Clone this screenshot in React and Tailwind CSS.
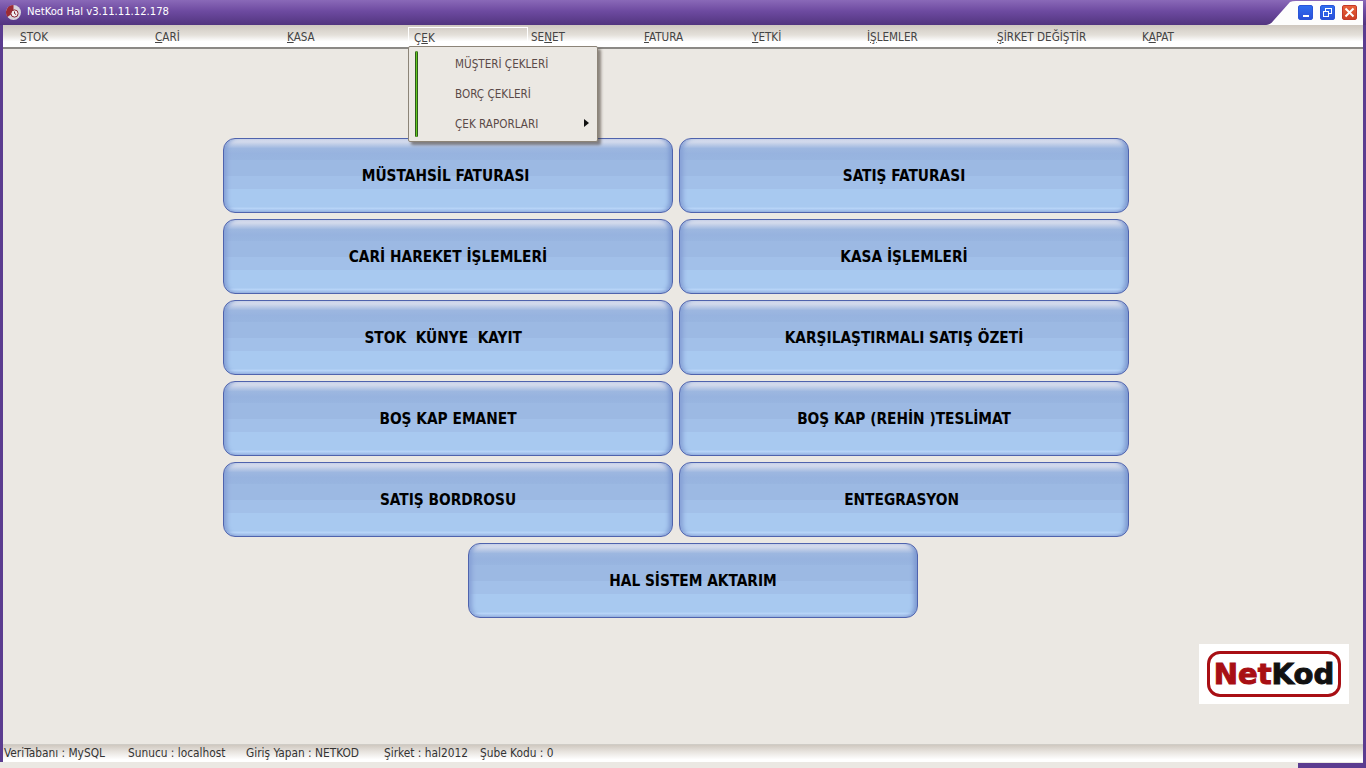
// NetKod Hal main window
const MENU = [
  { pre: '', key: 'S', post: 'TOK', w: 135 },
  { pre: '', key: 'C', post: 'ARİ', w: 132 },
  { pre: '', key: 'K', post: 'ASA', w: 124 },
  { pre: 'Ç', key: 'E', post: 'K', w: 120, active: true },
  { pre: 'SE', key: 'N', post: 'ET', w: 113 },
  { pre: '', key: 'F', post: 'ATURA', w: 108 },
  { pre: '', key: 'Y', post: 'ETKİ', w: 115 },
  { pre: 'İ', key: 'Ş', post: 'LEMLER', w: 130 },
  { pre: '', key: 'Ş', post: 'İRKET DEĞİŞTİR', w: 145 },
  { pre: 'K', key: 'A', post: 'PAT', w: 80 },
]

const BUTTONS = [
  'MÜSTAHSİL FATURASI ', 'SATIŞ FATURASI',
  'CARİ HAREKET İŞLEMLERİ', 'KASA İŞLEMLERİ',
  'STOK  KÜNYE  KAYIT  ', 'KARŞILAŞTIRMALI SATIŞ ÖZETİ',
  'BOŞ KAP EMANET', 'BOŞ KAP (REHİN )TESLİMAT',
  'SATIŞ BORDROSU', 'ENTEGRASYON ',
]

const STATUS = [
  ['VeriTabanı : MySQL', 124],
  ['Sunucu : localhost', 118],
  ['Giriş Yapan : NETKOD', 138],
  ['Şirket : hal2012', 96],
  ['Şube Kodu : 0', 100],
]

function BigButton({ label, className = '' }) {
  return (
    <button
      className={`relative h-[75px] w-[450px] whitespace-pre rounded-[12px] border border-[#4f63ad] bg-[linear-gradient(180deg,#e4e6f0_0%,#cdd6ea_5%,#9db7e0_13%,#97b3df_20%,#98b5e0_28%,#9cb9e3_29%,#9cb9e3_50%,#a2c0e9_51%,#a2c0e9_68%,#a8c9f0_69%,#a8c9f0_93%,#b8d5f8_95%,#9db8e4_100%)] pt-[1px] text-center font-['DejaVu_Sans_Condensed','Liberation_Sans',sans-serif] text-[15.3px] font-bold text-black shadow-[inset_5px_0_4px_-2px_#86a1d6,inset_-5px_0_4px_-2px_#7c98d0] ${className}`}
    >
      {label}
    </button>
  )
}

function WinButton({ bg, children }) {
  return (
    <div className={`flex h-[15px] w-[15px] items-center justify-center rounded-[2px] border border-[#2a55d8] ${bg}`}>
      {children}
    </div>
  )
}

function Logo() {
  return (
    <div className="flex h-[60px] w-[150px] items-center justify-center bg-white">
      <div className="flex h-[46px] w-[134px] items-center justify-center rounded-[13px] border-[3px] border-[#a80f14] font-['DejaVu_Sans',sans-serif] text-[29px] font-bold leading-none [-webkit-text-stroke:1px]">
        <span className="text-[#a80f14]">Net</span>
        <span className="text-[#111]">Kod</span>
      </div>
    </div>
  )
}

export default function App() {
  return (
    <div className="relative flex h-screen w-full flex-col overflow-hidden bg-[#ebe8e3] font-['DejaVu_Sans_Condensed','Liberation_Sans',sans-serif] text-[11.6px] text-[#3a3a3a]">
      {/* title bar */}
      <div className="relative flex h-[25px] shrink-0 items-center bg-[linear-gradient(180deg,#8a69b8_0%,#6d4aa0_45%,#52357f_100%)] pl-[5px]">
        <svg width="17" height="17" viewBox="0 0 17 17" className="mr-[5px]">
          <circle cx="8.5" cy="8.5" r="7.5" fill="#d7d3dc" />
          <path d="M8.5 1a7.5 7.5 0 0 0-6 12l6-4.5z" fill="#9c2b35" />
          <circle cx="9.5" cy="9.5" r="3.6" fill="#f1eef2" stroke="#8d2630" />
          <path d="M9.5 7.5v2l1.6 1" fill="none" stroke="#7a1f28" />
        </svg>
        <span className="text-[11.2px] text-white">NetKod Hal v3.11.11.12.178</span>
        <svg width="100" height="25" viewBox="0 0 100 25" className="absolute right-0 top-0" preserveAspectRatio="none">
          <path d="M0 25 C3 25 5 24 8 20 L24 2 Q26 1 30 1 L97 1 L97 25 Z" fill="#fdfdfd" />
        </svg>
        <div className="absolute right-[9px] top-[5px] flex gap-[7px]">
          <WinButton bg="bg-[linear-gradient(180deg,#2f6df0,#2a50d8)]">
            <div className="mt-[6px] h-[2px] w-[6px] bg-white" />
          </WinButton>
          <WinButton bg="bg-[linear-gradient(180deg,#2f6df0,#2a50d8)]">
            <svg width="11" height="11" viewBox="0 0 11 11" fill="none" stroke="#fff">
              <rect x="3.5" y="1.5" width="6" height="5" />
              <rect x="1.5" y="4.5" width="5" height="5" fill="#2f62e6" />
            </svg>
          </WinButton>
          <div className="flex h-[15px] w-[15px] items-center justify-center rounded-[2px] border border-[#c2392a] bg-[linear-gradient(180deg,#e8633a,#cc3f24)]">
            <svg width="11" height="11" viewBox="0 0 11 11" stroke="#fff" strokeWidth="2">
              <path d="M1.5 1.5l8 8M9.5 1.5l-8 8" />
            </svg>
          </div>
        </div>
      </div>

      {/* menu bar */}
      <div className="mr-[3px] ml-[3px] flex h-[24px] shrink-0 border-b-2 border-[#8b8985] bg-[linear-gradient(180deg,#cfc8c0_0%,#e4e0da_45%,#ffffff_75%,#ffffff_100%)] pl-[14px] pt-[2px] text-[#444]">
        {MENU.map((m) => (
          <div
            key={m.post + m.key}
            style={{ width: m.w }}
            className={`h-[20px] whitespace-nowrap pl-[3px] leading-[20px] ${m.active ? 'border-l border-r border-t border-white pl-[5px]' : ''}`}
          >
            {m.pre}
            <span className="underline">{m.key}</span>
            {m.post}
          </div>
        ))}
      </div>

      {/* main area */}
      <div className="ml-[3px] mr-[3px] flex min-h-0 flex-1 flex-col">
        <div className="ml-[220px] mt-[89px] grid w-[906px] grid-cols-[450px_450px] gap-x-[6px] gap-y-[6px]">
          {BUTTONS.map((b) => (
            <BigButton key={b} label={b} />
          ))}
          <BigButton label="HAL SİSTEM AKTARIM" className="col-span-2 ml-[245px]" />
        </div>
        <div className="mr-[14px] mt-[26px] flex justify-end">
          <Logo />
        </div>
      </div>

      {/* status bar */}
      <div className="ml-[3px] mr-[3px] mb-[6px] mt-auto flex h-[18px] shrink-0 items-center border-t border-[#cfccc6] bg-[linear-gradient(180deg,#cfc8c0_0%,#e8e4df_40%,#ffffff_85%)] pl-[1px] text-[11.8px] text-[#333]">
        {STATUS.map(([t, w]) => (
          <span key={t} style={{ width: w }} className="whitespace-nowrap">
            {t}
          </span>
        ))}
      </div>

      {/* window frame */}
      <div className="absolute bottom-[6px] left-0 top-[25px] w-[3px] bg-[#5b3c90]" />
      <div className="absolute bottom-[5px] right-0 top-[25px] w-[3px] bg-[#5b3c90]" />
      <div className="absolute bottom-0 right-0 h-[5px] w-[68px] bg-[#5b3c90]" />

      {/* open ÇEK menu */}
      <div className="absolute left-[408px] top-[46px] flex h-[96px] w-[190px] rounded-[2px] border border-[#8c8478] bg-[#ebe8e3] shadow-[3px_3px_3px_rgba(60,50,40,0.55)]">
        <div className="ml-[6px] mt-[4px] h-[86px] w-[3px] rounded-[2px] border-x border-[#2d5a1c] bg-[#62c61e]" />
        <div className="ml-[37px] flex flex-col text-[#5a4a48]">
          {['MÜŞTERİ ÇEKLERİ', 'BORÇ ÇEKLERİ', 'ÇEK RAPORLARI'].map((t) => (
            <div key={t} className="flex h-[30px] items-center whitespace-nowrap first:mt-[3px]">
              {t}
            </div>
          ))}
        </div>
        <svg width="5" height="8" viewBox="0 0 5 8" className="absolute left-[175px] top-[72px]">
          <path d="M0 0l5 4-5 4z" fill="#111" />
        </svg>
      </div>
    </div>
  )
}
